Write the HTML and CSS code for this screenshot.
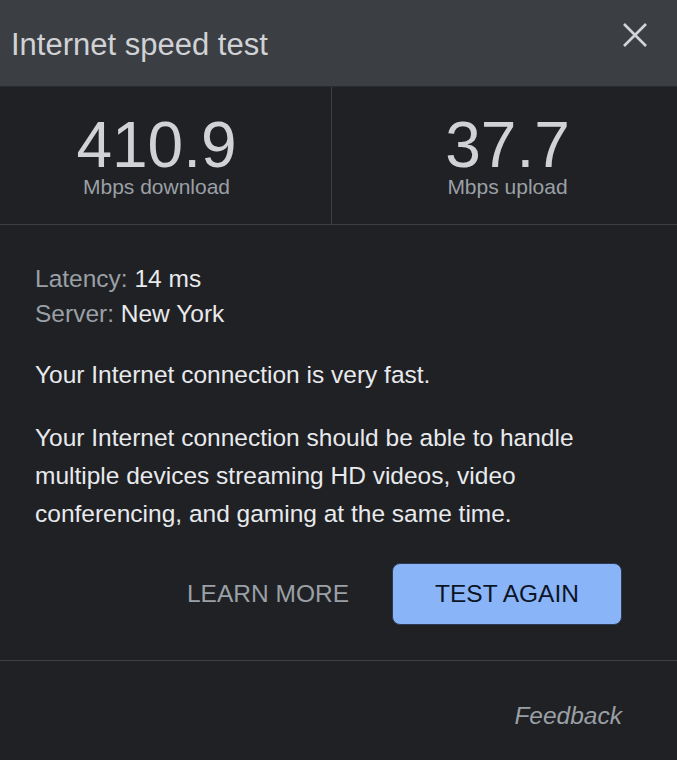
FILE: index.html
```html
<!DOCTYPE html>
<html lang="en">
<head>
<meta charset="utf-8">
<title>Internet speed test</title>
<link rel="stylesheet" href="styles.css">
</head>
<body>
<div class="panel">
  <header class="header">
    <h1 class="title">Internet speed test</h1>
    <button class="close" aria-label="Close">
      <svg width="26" height="26" viewBox="0 0 26 26"><path d="M2 2L24 24M24 2L2 24" stroke="#d2d4d7" stroke-width="2.6" stroke-linecap="butt" fill="none"/></svg>
    </button>
  </header>
  <section class="stats">
    <div class="stat stat-left">
      <div class="num">410.9</div>
      <div class="unit">Mbps download</div>
    </div>
    <div class="stat stat-right">
      <div class="num">37.7</div>
      <div class="unit">Mbps upload</div>
    </div>
  </section>
  <section class="info">
    <div class="meta">
      <div><span class="label">Latency:</span> <span class="value">14 ms</span></div>
      <div><span class="label">Server:</span> <span class="value">New York</span></div>
    </div>
    <p class="para">Your Internet connection is very fast.</p>
    <p class="para">Your Internet connection should be able to handle multiple devices streaming HD videos, video conferencing, and gaming at the same time.</p>
    <div class="actions">
      <button class="learn">LEARN MORE</button>
      <button class="again">TEST AGAIN</button>
    </div>
  </section>
  <footer class="footer">
    <a class="feedback">Feedback</a>
  </footer>
</div>
</body>
</html>
```
FILE: styles.css
```css
html, body {
  margin: 0;
  padding: 0;
  background: #202124;
}
body {
  font-family: "Liberation Sans", Arial, sans-serif;
  color: #e8eaed;
  width: 677px;
  height: 760px;
  overflow: hidden;
}
.panel {
  display: flex;
  flex-direction: column;
}
.header {
  height: 86px;
  background: #3b3e43;
  border-bottom: 1px solid #2a2b2f;
  display: flex;
  align-items: center;
  justify-content: space-between;
  padding: 0 29px 0 11px;
}
.title {
  margin: 3px 0 0;
  font-size: 31px;
  line-height: 36px;
  font-weight: normal;
  color: #d0d2d5;
}
.close {
  background: none;
  border: 0;
  padding: 0;
  margin-top: -16px;
  width: 26px;
  height: 26px;
  display: flex;
}
.stats {
  display: grid;
  grid-template-columns: 332px 1fr;
  height: 137px;
  border-bottom: 1px solid #3c4043;
}
.stat {
  display: flex;
  flex-direction: column;
  align-items: center;
  padding-top: 28px;
}
.stat-left {
  border-right: 1px solid #3c4043;
  padding-right: 18px;
}
.stat-right {
  padding-left: 6px;
}
.num {
  font-size: 64px;
  line-height: 60px;
  color: #d0d2d6;
}
.unit {
  font-size: 21px;
  line-height: 22px;
  margin-top: 1px;
  color: #9aa0a6;
}
.info {
  padding: 36px 55px 0 35px;
  font-size: 24.5px;
}
.meta {
  line-height: 35px;
}
.label {
  color: #9aa0a6;
}
.value {
  color: #e8eaed;
}
.para {
  margin: 25px 0 0;
  line-height: 38px;
  color: #e8eaed;
}
.actions {
  display: flex;
  justify-content: flex-end;
  align-items: center;
  gap: 43px;
  margin-top: 30px;
  padding-bottom: 35px;
}
.learn {
  background: none;
  border: 0;
  padding: 0;
  font-family: inherit;
  font-size: 24.5px;
  color: #9aa0a6;
}
.again {
  width: 230px;
  height: 62px;
  background: #8ab4f8;
  border: 1px solid #2c3a55;
  border-radius: 8px;
  font-family: inherit;
  font-size: 24.5px;
  color: #0c1526;
}
.footer {
  border-top: 1px solid #3c4043;
  display: flex;
  justify-content: flex-end;
  padding: 36px 55px 0 0;
}
.feedback {
  font-size: 24.5px;
  line-height: 38px;
  font-style: italic;
  color: #9aa0a6;
}
```
